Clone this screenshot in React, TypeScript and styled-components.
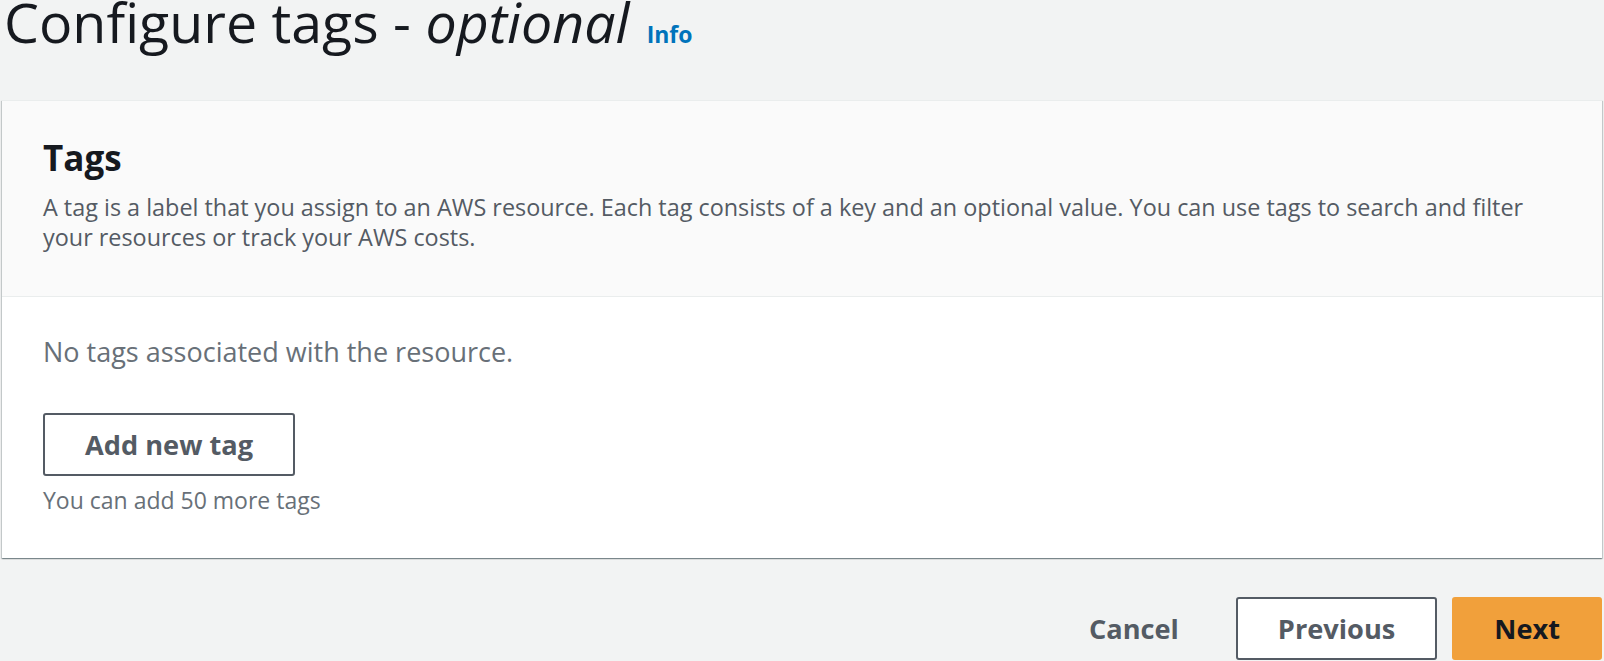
import React from "react";
import styled, { createGlobalStyle } from "styled-components";

const Global = createGlobalStyle`
  html, body {
    margin: 0;
    padding: 0;
    background: #f2f3f3;
  }
  body {
    font-family: "Open Sans", Roboto, Arial, sans-serif;
    color: #16191f;
  }
  * { box-sizing: border-box; }
`;

const Page = styled.div`
  padding: 0 2px;
  display: flex;
  flex-direction: column;
`;

const TitleRow = styled.div`
  display: flex;
  align-items: baseline;
  gap: 17px;
  height: 43px;
  padding-left: 2px;
  margin-bottom: 57px;
`;

const Title = styled.h1`
  margin: 0;
  font-size: 55.5px;
  line-height: 43px;
  font-weight: 400;
  color: #16191f;
  white-space: nowrap;
`;

const Optional = styled.em`
  font-style: italic;
`;

const InfoLink = styled.a`
  font-size: 23px;
  line-height: 24px;
  font-weight: 700;
  color: #0073bb;
  text-decoration: none;
`;

const Panel = styled.section`
  background: #ffffff;
  box-shadow: 0 1px 1px 0 rgba(0, 28, 36, 0.3), 1px 1px 1px 0 rgba(0, 28, 36, 0.15),
    -1px 1px 1px 0 rgba(0, 28, 36, 0.15);
  border-top: 1px solid #eaeded;
`;

const PanelHeader = styled.header`
  background: #fafafa;
  border-bottom: 1px solid #eaeded;
  padding: 35px 40px 44px 41px;
`;

const PanelTitle = styled.h2`
  margin: 0 0 12px;
  font-size: 35px;
  line-height: 44px;
  font-weight: 700;
  color: #16191f;
`;

const Description = styled.p`
  margin: 0;
  max-width: 1495px;
  font-size: 23.4px;
  line-height: 30px;
  color: #545b64;
`;

const PanelBody = styled.div`
  padding: 38px 40px 44px 41px;
  display: flex;
  flex-direction: column;
  align-items: flex-start;
`;

const EmptyText = styled.p`
  margin: 0 0 44px;
  font-size: 27px;
  line-height: 34px;
  color: #687078;
`;

const Button = styled.button<{ $variant?: "normal" | "primary" | "link" }>`
  height: 63px;
  padding: 0 40px;
  border-radius: 3px;
  font-family: inherit;
  font-size: 27.2px;
  font-weight: 700;
  cursor: pointer;
  border: 2px solid
    ${(p) => (p.$variant === "primary" ? "#f1a03b" : p.$variant === "link" ? "transparent" : "#545b64")};
  background: ${(p) => (p.$variant === "primary" ? "#f1a03b" : p.$variant === "link" ? "transparent" : "#ffffff")};
  color: ${(p) => (p.$variant === "primary" ? "#16191f" : "#545b64")};
`;

const Hint = styled.p`
  margin: 10px 0 0;
  font-size: 23px;
  line-height: 28px;
  color: #687078;
`;

const Footer = styled.div`
  display: flex;
  justify-content: flex-end;
  gap: 15px;
  margin-top: 39px;
`;

export default function App() {
  return (
    <>
      <Global />
      <Page>
        <TitleRow>
          <Title>
            Configure tags - <Optional>optional</Optional>
          </Title>
          <InfoLink href="#">Info</InfoLink>
        </TitleRow>
        <Panel>
          <PanelHeader>
            <PanelTitle>Tags</PanelTitle>
            <Description>
              A tag is a label that you assign to an AWS resource. Each tag consists of a key and an optional value. You
              can use tags to search and filter your resources or track your AWS costs.
            </Description>
          </PanelHeader>
          <PanelBody>
            <EmptyText>No tags associated with the resource.</EmptyText>
            <Button>Add new tag</Button>
            <Hint>You can add 50 more tags</Hint>
          </PanelBody>
        </Panel>
        <Footer>
          <Button $variant="link">Cancel</Button>
          <Button>Previous</Button>
          <Button $variant="primary">Next</Button>
        </Footer>
      </Page>
    </>
  );
}
